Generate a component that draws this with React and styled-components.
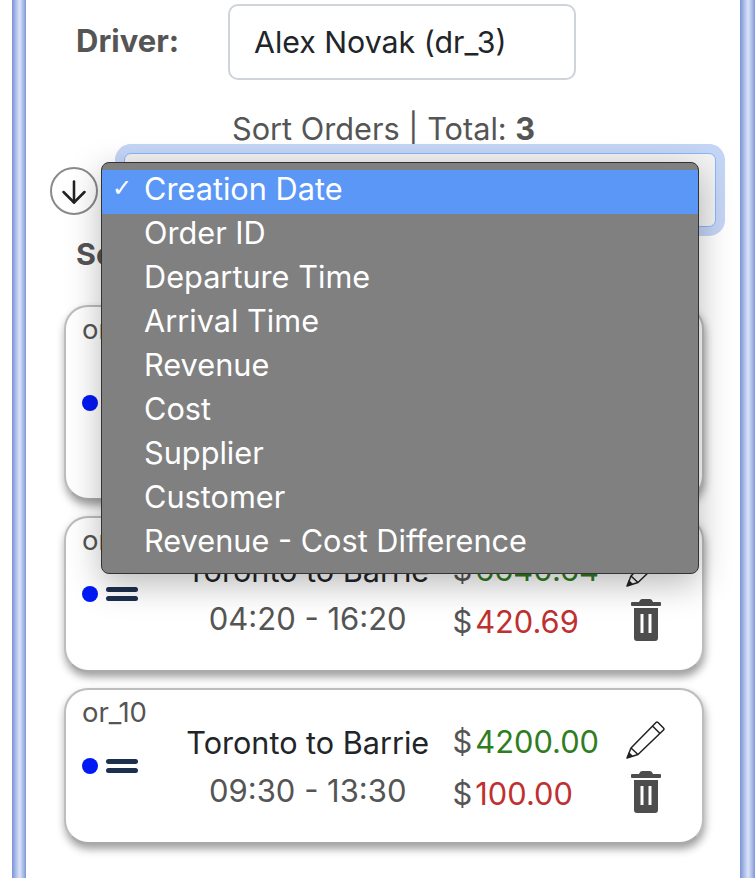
import React from "react";
import styled, { createGlobalStyle } from "styled-components";
import { ArrowDown } from "lucide-react";

const orders = [
  { id: "or_8", route: "Toronto to Barrie", time: "10:00 - 18:00", revenue: "5120.00", cost: "250.00", tall: true },
  { id: "or_9", route: "Toronto to Barrie", time: "04:20 - 16:20", revenue: "6640.64", cost: "420.69" },
  { id: "or_10", route: "Toronto to Barrie", time: "09:30 - 13:30", revenue: "4200.00", cost: "100.00" },
];

const sortOptions = [
  "Creation Date",
  "Order ID",
  "Departure Time",
  "Arrival Time",
  "Revenue",
  "Cost",
  "Supplier",
  "Customer",
  "Revenue - Cost Difference",
];

const TrashIcon = () => (
  <svg width="30" height="42" viewBox="0 0 30 42">
    <path
      fill="#4d4d4d"
      fillRule="evenodd"
      d="M11 0h8q2 0 3 3h7q1 0 1 1v2q0 1-1 1H1Q0 7 0 6V4q0-1 1-1h7q1-3 3-3zM3 9h24v30q0 3-3 3H6q-3 0-3-3zM9.5 15v19h3V15zM17.5 15v19h3V15z"
    />
  </svg>
);

const PencilIcon = () => (
  <svg width="40" height="39" viewBox="0 0 40 39">
    <path
      fill="none"
      stroke="#222"
      strokeWidth="1.5"
      strokeLinejoin="round"
      d="M1 38 5 28 30 2.5q1-1 2 0l5.5 5.5q1 1 0 2L12 34.5zM26.5 6l7.5 7.5M5 28l7 6.5"
    />
    <path fill="#222" d="M1 38l2-6 4 4z" />
  </svg>
);

const BarsIcon = () => (
  <svg width="32" height="16" viewBox="0 0 32 16">
    <rect x="0" y="1" width="32" height="5" rx="2.5" fill="#1c2f4f" />
    <rect x="0" y="10" width="32" height="5" rx="2.5" fill="#1c2f4f" />
  </svg>
);

const App = () => {
  return (
    <>
      <GlobalStyle />
      <Frame>
        <DriverRow>
          <DriverLabel>Driver:</DriverLabel>
          <DriverInput>Alex Novak (dr_3)</DriverInput>
        </DriverRow>
        <SortTitle>
          Sort Orders | Total: <b>3</b>
        </SortTitle>
        <SortRow>
          <DirectionButton>
            <ArrowDown size={36} strokeWidth={1.7} />
          </DirectionButton>
          <SortSelect />
          <NativeMenu>
            {sortOptions.map((option, i) => (
              <MenuItem key={option} $active={i === 0}>
                <Check>{i === 0 ? "✓" : ""}</Check>
                {option}
              </MenuItem>
            ))}
          </NativeMenu>
        </SortRow>
        <Heading>Selected Orders</Heading>
        <OrderList>
          {orders.map((order) => (
            <OrderCard key={order.id} $tall={order.tall}>
              <OrderId>{order.id}</OrderId>
              <Handle>
                <Dot />
                <BarsIcon />
              </Handle>
              <RouteInfo>
                <Route>{order.route}</Route>
                <Time>{order.time}</Time>
              </RouteInfo>
              <Amounts>
                <Amount>
                  <span>$</span>
                  <Revenue>{order.revenue}</Revenue>
                </Amount>
                <Amount>
                  <span>$</span>
                  <Cost>{order.cost}</Cost>
                </Amount>
              </Amounts>
              <Actions>
                <PencilIcon />
                <TrashIcon />
              </Actions>
            </OrderCard>
          ))}
        </OrderList>
      </Frame>
    </>
  );
};

//Styled Components
const GlobalStyle = createGlobalStyle`
  html, body {
    margin: 0;
    height: 878px;
    overflow: hidden;
    background: #fff;
    font-family: Inter, "Liberation Sans", sans-serif;
  }
`;

const Frame = styled.div`
  box-sizing: border-box;
  width: 743px;
  height: 878px;
  margin-left: 12px;
  padding: 4px 14px 0;
  background:
    linear-gradient(90deg, #7a93d8, #b9c8ee 35%, #dbe3f6 55%, #a9bbe8 80%, #7f97d9) left top / 14px 100% no-repeat,
    linear-gradient(90deg, #7a93d8, #b9c8ee 35%, #dbe3f6 55%, #a9bbe8 80%, #7f97d9) right top / 15px 100% no-repeat;
`;

const DriverRow = styled.div`
  display: flex;
  align-items: center;
  padding-left: 50px;
`;

const DriverLabel = styled.div`
  width: 152px;
  padding-bottom: 4px;
  font-size: 31px;
  font-weight: 700;
  color: #555;
`;

const DriverInput = styled.div`
  box-sizing: border-box;
  width: 348px;
  height: 76px;
  padding-left: 24px;
  display: flex;
  align-items: center;
  border: 2px solid #ced4da;
  border-radius: 10px;
  font-size: 30.3px;
  color: #212529;
`;

const SortTitle = styled.div`
  margin-top: 29px;
  padding-left: 206px;
  height: 40px;
  line-height: 40px;
  font-size: 30.7px;
  color: #555;
  b {
    font-weight: 700;
  }
`;

const SortRow = styled.div`
  position: relative;
  display: flex;
  align-items: center;
  margin-top: 4px;
  padding-left: 24px;
`;

const DirectionButton = styled.div`
  box-sizing: border-box;
  width: 48px;
  height: 48px;
  margin-top: 1px;
  padding-top: 3px;
  display: flex;
  align-items: center;
  justify-content: center;
  border: 2px solid #8a8a8a;
  border-radius: 50%;
  color: #222;
`;

const SortSelect = styled.div`
  box-sizing: border-box;
  width: 592px;
  height: 74px;
  margin-left: 26px;
  border: 1.5px solid #86b7fe;
  border-radius: 7px;
  background: #f3f3f3;
  box-shadow: 0 0 0 9px #c5d5f6;
`;

const NativeMenu = styled.div`
  position: absolute;
  z-index: 2;
  top: 9px;
  left: 75px;
  box-sizing: border-box;
  width: 598px;
  padding: 7px 0;
  background: #808080;
  border: 1px solid #333;
  border-radius: 8px;
  box-shadow: 0 10px 34px rgba(0, 0, 0, 0.28);
`;

const MenuItem = styled.div`
  display: flex;
  align-items: center;
  box-sizing: border-box;
  height: 44px;
  padding-bottom: 8px;
  font-size: 30.7px;
  color: #fff;
  background: ${(props) => (props.$active ? "#5b97f7" : "transparent")};
`;

const Check = styled.span`
  width: 42px;
  padding-left: 10px;
  box-sizing: border-box;
  font-family: "DejaVu Sans", sans-serif;
  font-size: 24px;
`;

const Heading = styled.div`
  margin-top: 7px;
  padding-left: 50px;
  height: 40px;
  line-height: 40px;
  font-size: 30.5px;
  font-weight: 700;
  color: #555;
`;

const OrderList = styled.div`
  display: flex;
  flex-direction: column;
  gap: 16px;
  margin: 31px 37px 0 38px;
`;

const OrderCard = styled.div`
  position: relative;
  box-sizing: border-box;
  height: ${(props) => (props.$tall ? "195px" : "156px")};
  padding: 0 36px 0 16px;
  display: flex;
  align-items: center;
  background: #fff;
  border: 2px solid #bdbdbd;
  border-bottom-color: #aaa;
  border-radius: 24px;
  box-shadow: 1px 5px 8px rgba(0, 0, 0, 0.38);
`;

const OrderId = styled.div`
  position: absolute;
  top: 5px;
  left: 16px;
  font-size: 27.5px;
  color: #555;
`;

const Handle = styled.div`
  display: flex;
  align-items: center;
  gap: 8px;
`;

const Dot = styled.span`
  width: 16px;
  height: 16px;
  border-radius: 50%;
  background: #0019f5;
`;

const RouteInfo = styled.div`
  flex: 1;
  padding: 2px 0 0 25px;
  text-align: center;
`;

const Route = styled.div`
  font-size: 30.6px;
  line-height: 48px;
  color: #212529;
`;

const Time = styled.div`
  font-size: 31px;
  line-height: 48px;
  color: #555;
`;

const Amounts = styled.div`
  display: flex;
  flex-direction: column;
  margin-right: 27px;
  padding-top: 3px;
`;

const Amount = styled.div`
  display: flex;
  gap: 3px;
  font-size: 30.8px;
  line-height: 52px;
  color: #555;
`;

const Revenue = styled.span`
  color: #2f7d1f;
`;

const Cost = styled.span`
  color: #bf3030;
`;

const Actions = styled.div`
  display: flex;
  flex-direction: column;
  align-items: center;
  gap: 12px;
  width: 40px;
`;

export default App;
